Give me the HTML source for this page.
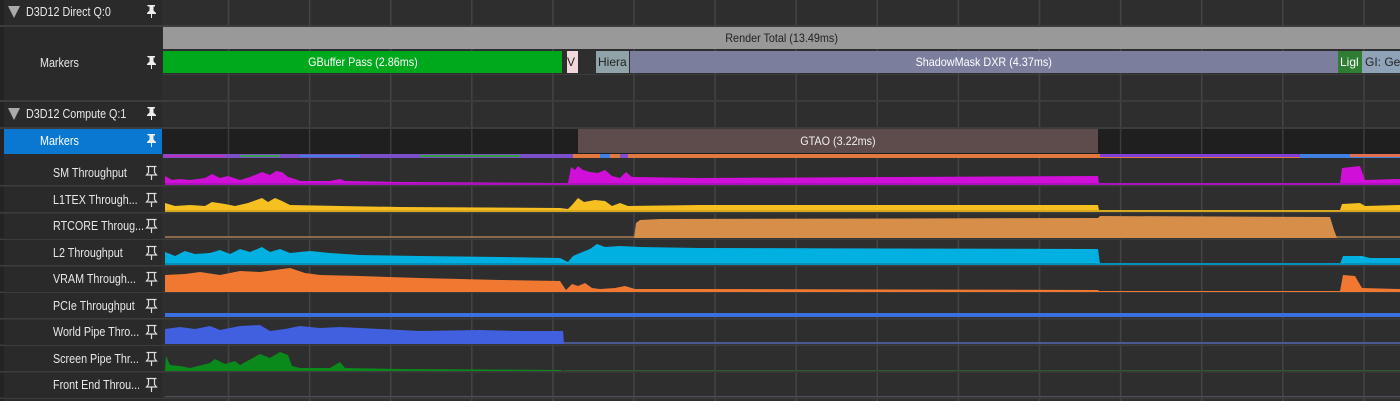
<!DOCTYPE html>
<html><head><meta charset="utf-8"><style>
*{margin:0;padding:0;box-sizing:border-box}
body{width:1400px;height:401px;background:#2b2b2b;overflow:hidden;font-family:"Liberation Sans",sans-serif;font-size:12px;color:#e8e8e8;position:relative}
.a{position:absolute}
.lab{position:absolute;left:4px;width:158px;background:#2a2a2a;}
.t{position:absolute;white-space:nowrap;line-height:1;transform:scaleX(0.86);transform-origin:left top;font-size:12.5px}
.bar{position:absolute;color:#fff;text-align:center;font-size:12px;line-height:22px;overflow:hidden;white-space:nowrap}
.bar span{display:inline-block;transform:scaleX(0.9)}
</style></head><body>
<div class="a" style="left:0;top:0;width:4px;height:401px;background:#232323"></div>
<svg class="a" style="left:0;top:0" width="1400" height="401">
<rect x="162" y="0" width="1238" height="401" fill="#2e2e2e"/>
<g stroke="#444" stroke-width="1.5">
<line x1="228.5" y1="0" x2="228.5" y2="401"/><line x1="309.6" y1="0" x2="309.6" y2="401"/><line x1="390.7" y1="0" x2="390.7" y2="401"/><line x1="471.8" y1="0" x2="471.8" y2="401"/><line x1="552.9" y1="0" x2="552.9" y2="401"/><line x1="634" y1="0" x2="634" y2="401"/><line x1="715.1" y1="0" x2="715.1" y2="401"/><line x1="796.2" y1="0" x2="796.2" y2="401"/><line x1="877.3" y1="0" x2="877.3" y2="401"/><line x1="958.4" y1="0" x2="958.4" y2="401"/><line x1="1039.5" y1="0" x2="1039.5" y2="401"/><line x1="1120.6" y1="0" x2="1120.6" y2="401"/><line x1="1201.7" y1="0" x2="1201.7" y2="401"/><line x1="1282.8" y1="0" x2="1282.8" y2="401"/><line x1="1363.9" y1="0" x2="1363.9" y2="401"/>
</g>
<g fill="#3c3c3c">
<rect x="0" y="25" width="1400" height="2"/><rect x="0" y="100" width="1400" height="2"/><rect x="162" y="74" width="1238" height="1"/>
<rect x="0" y="127" width="1400" height="2"/>
<rect x="0" y="185" width="1400" height="1.5"/><rect x="0" y="212" width="1400" height="1.5"/><rect x="0" y="238.5" width="1400" height="1.5"/><rect x="0" y="265" width="1400" height="1.5"/><rect x="0" y="291.5" width="1400" height="1.5"/><rect x="0" y="318" width="1400" height="1.5"/><rect x="0" y="344.5" width="1400" height="1.5"/><rect x="0" y="371" width="1400" height="1.5"/><rect x="0" y="397.5" width="1400" height="1.5"/>
</g>
<rect x="162" y="129" width="1238" height="25" fill="#1f1f1f"/>
<g stroke="#3c3c3c" stroke-width="1.5"><line x1="228.5" y1="129" x2="228.5" y2="154"/><line x1="309.6" y1="129" x2="309.6" y2="154"/><line x1="390.7" y1="129" x2="390.7" y2="154"/><line x1="471.8" y1="129" x2="471.8" y2="154"/><line x1="552.9" y1="129" x2="552.9" y2="154"/><line x1="1120.6" y1="129" x2="1120.6" y2="154"/><line x1="1201.7" y1="129" x2="1201.7" y2="154"/><line x1="1282.8" y1="129" x2="1282.8" y2="154"/><line x1="1363.9" y1="129" x2="1363.9" y2="154"/></g>
<rect x="578" y="129" width="520" height="24" fill="#5e4c4c"/>
<rect x="163" y="154" width="410" height="4" fill="#7a4fc8"/>
<rect x="165" y="155" width="60" height="2" fill="#c030c0"/><rect x="240" y="155" width="40" height="2" fill="#3aa050"/><rect x="300" y="155" width="60" height="2" fill="#4080e0"/><rect x="420" y="155" width="100" height="2" fill="#30a040"/>
<rect x="573" y="154" width="527" height="4" fill="#e07840"/><rect x="600" y="154" width="10" height="4" fill="#4080e0"/><rect x="620" y="154" width="8" height="4" fill="#8050d0"/>
<rect x="1100" y="154" width="200" height="4" fill="#8040d8"/><rect x="1100" y="157" width="200" height="1" fill="#e07840"/><rect x="1300" y="154" width="100" height="4" fill="#4080e0"/><rect x="1350" y="154" width="50" height="3" fill="#e07050"/>
<polygon fill="#d010d8" points="165,184 165,176 172,180 180,179 190,180 205,178 212,174 220,178 228,176 240,180 250,177 262,172 270,175 276,171 282,172 288,177 295,179 300,181 330,181 340,179 345,181 400,182 560,183 568,183 571,167 575,170 578,166 583,170 590,172 598,173 605,170 612,176 620,178 626,172 632,177 700,178 900,177 1098,176 1099,184 1340,184 1342,168 1360,166 1365,180 1400,179 1400,185 165,185"/>
<rect x="165" y="183" width="1235" height="2" fill="#b010c0"/>
<polygon fill="#f5c020" points="165,211 165,203 175,206 190,205 205,206 212,202 225,204 235,206 248,203 262,198 268,202 275,198 282,201 290,205 340,206 400,207 560,208 568,209 572,205 578,198 584,202 595,200 605,201 612,206 620,203 628,206 700,205 1098,205 1099,210 1340,210 1342,204 1360,203 1365,206 1400,205 1400,212 165,212"/>
<rect x="165" y="210" width="1235" height="2" fill="#d8a820"/>
<rect x="165" y="236" width="1235" height="2" fill="#8a6a4a"/>
<polygon fill="#d68e48" points="634,238 636,223 640,220 660,219 1098,218 1100,216 1330,217 1334,230 1337,238"/>
<polygon fill="#00b0e0" points="165,264 165,252 175,256 185,251 195,254 210,253 220,250 230,254 240,249 250,252 262,247 270,252 280,249 290,253 310,251 330,253 360,255 420,256 500,257 560,258 568,262 573,256 580,253 590,249 597,244 605,247 620,246 640,247 700,248 1098,249 1100,264 1340,264 1343,256 1362,256 1370,258 1400,258 1400,265 165,265"/>
<rect x="165" y="263" width="1235" height="2" fill="#0090b8"/>
<polygon fill="#f07830" points="165,291 165,275 185,274 200,272 220,275 240,271 260,272 275,270 290,268 305,273 320,275 360,276 420,278 500,280 560,281 566,290 572,284 578,286 585,283 592,288 600,289 615,288 625,286 635,289 700,289 1098,290 1099,291 1340,291 1343,275 1355,276 1362,288 1400,289 1400,292 165,292"/>
<rect x="165" y="313" width="1235" height="4" fill="#3a70e0"/>
<polygon fill="#4060e0" points="165,344 165,329 180,327 195,329 210,326 220,330 240,326 260,325 270,331 285,329 300,326 320,328 340,327 380,329 420,331 480,330 520,331 560,331 563,331 564,344"/>
<rect x="564" y="342" width="836" height="2" fill="#4a5a90"/>
<polygon fill="#0a8a1a" points="165,371 166,356 170,365 180,366 190,368 210,363 215,359 225,364 235,361 240,365 260,354 270,358 280,352 288,355 292,366 300,368 330,368 340,362 345,368 400,369 560,370 564,371"/>
<rect x="564" y="370" width="836" height="1" fill="#2a5a2a"/>
<rect x="165" y="396" width="1235" height="1" fill="#50505a"/>
</svg>
<div class="bar" style="left:163px;top:27px;width:1237px;height:22px;background:#999;color:#222"><span>Render Total (13.49ms)</span></div>
<div class="bar" style="left:163px;top:51px;width:399px;height:22px;background:#00a81c"><span>GBuffer Pass (2.86ms)</span></div>
<div class="bar" style="left:567px;top:51px;width:11px;height:22px;background:#f0d8dc;color:#222;text-align:left">V</div>
<div class="bar" style="left:596px;top:51px;width:33px;height:22px;background:#8fa3a8;color:#222;text-align:left;padding-left:2px">Hiera</div>
<div class="bar" style="left:630px;top:51px;width:708px;height:22px;background:#7b7e9d"><span>ShadowMask DXR (4.37ms)</span></div>
<div class="bar" style="left:1338px;top:51px;width:24px;height:22px;background:#2e7d32;text-align:left;padding-left:2px">Ligl</div>
<div class="bar" style="left:1362px;top:51px;width:38px;height:22px;background:#8fa3b8;color:#222;text-align:left;padding-left:3px">GI: Gen</div>
<div class="bar" style="left:578px;top:130px;width:520px;height:22px;color:#eee"><span>GTAO (3.22ms)</span></div>
<div class="lab" style="top:0;height:25px"></div>
<div class="lab" style="top:27px;height:73px"></div>
<div class="lab" style="top:102px;height:25px"></div>
<div class="lab" style="top:129px;height:25px;background:#0a78d0"></div>
<div class="lab" style="top:158px;height:27px"></div>
<div class="lab" style="top:186.5px;height:25.5px"></div>
<div class="lab" style="top:213.5px;height:25px"></div>
<div class="lab" style="top:240px;height:25px"></div>
<div class="lab" style="top:266.5px;height:25px"></div>
<div class="lab" style="top:293px;height:25px"></div>
<div class="lab" style="top:319.5px;height:25px"></div>
<div class="lab" style="top:346px;height:25px"></div>
<div class="lab" style="top:372.5px;height:25px"></div>
<svg class="a" style="left:0;top:0" width="162" height="401">
<polygon points="8,6 20,6 14,18" fill="#aaa"/>
<polygon points="8,108 20,108 14,120" fill="#aaa"/>
<g fill="#eee">
<path d="M147,5h8v1.5h-1.5v4l2.5,2.5v1h-4v4h-1v-4h-4v-1l2.5,-2.5v-4h-1.5z"/>
<path d="M147,56h8v1.5h-1.5v4l2.5,2.5v1h-4v4h-1v-4h-4v-1l2.5,-2.5v-4h-1.5z"/>
<path d="M147,107h8v1.5h-1.5v4l2.5,2.5v1h-4v4h-1v-4h-4v-1l2.5,-2.5v-4h-1.5z"/>
<path d="M147,134h8v1.5h-1.5v4l2.5,2.5v1h-4v4h-1v-4h-4v-1l2.5,-2.5v-4h-1.5z"/>
</g>
<g fill="none" stroke="#ddd" stroke-width="1.2">
<path d="M146.5,166.5h10M148.5,166.5v6l-2,2.5h10l-2,-2.5v-6M151.5,175v5"/>
<path d="M146.5,193.5h10M148.5,193.5v6l-2,2.5h10l-2,-2.5v-6M151.5,202v5"/>
<path d="M146.5,219.5h10M148.5,219.5v6l-2,2.5h10l-2,-2.5v-6M151.5,228v5"/>
<path d="M146.5,246.5h10M148.5,246.5v6l-2,2.5h10l-2,-2.5v-6M151.5,255v5"/>
<path d="M146.5,272.5h10M148.5,272.5v6l-2,2.5h10l-2,-2.5v-6M151.5,281v5"/>
<path d="M146.5,299.5h10M148.5,299.5v6l-2,2.5h10l-2,-2.5v-6M151.5,308v5"/>
<path d="M146.5,325.5h10M148.5,325.5v6l-2,2.5h10l-2,-2.5v-6M151.5,334v5"/>
<path d="M146.5,352.5h10M148.5,352.5v6l-2,2.5h10l-2,-2.5v-6M151.5,361v5"/>
<path d="M146.5,378.5h10M148.5,378.5v6l-2,2.5h10l-2,-2.5v-6M151.5,387v5"/>
</g>
</svg>
<div class="t" style="left:26px;top:6px">D3D12 Direct Q:0</div>
<div class="t" style="left:40px;top:57px">Markers</div>
<div class="t" style="left:26px;top:108px">D3D12 Compute Q:1</div>
<div class="t" style="left:40px;top:135px;color:#fff">Markers</div>
<div class="t" style="left:53px;top:167px">SM Throughput</div>
<div class="t" style="left:53px;top:194px">L1TEX Through...</div>
<div class="t" style="left:53px;top:220px">RTCORE Throug...</div>
<div class="t" style="left:53px;top:247px">L2 Throughput</div>
<div class="t" style="left:53px;top:273px">VRAM Through...</div>
<div class="t" style="left:53px;top:300px">PCIe Throughput</div>
<div class="t" style="left:53px;top:326px">World Pipe Thro...</div>
<div class="t" style="left:53px;top:353px">Screen Pipe Thr...</div>
<div class="t" style="left:53px;top:379px">Front End Throu...</div>
</body></html>
